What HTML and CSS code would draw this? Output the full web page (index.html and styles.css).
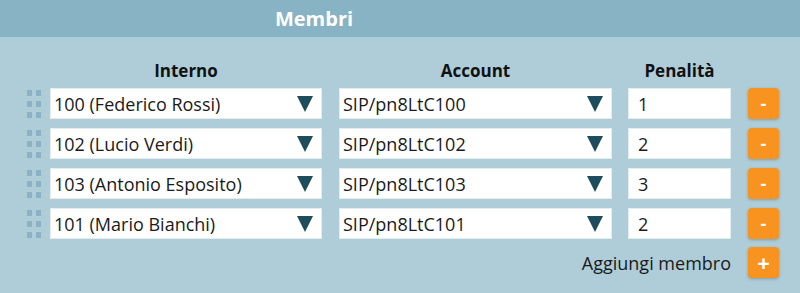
FILE: index.html
```html
<!DOCTYPE html>
<html lang="it">
<head>
<meta charset="utf-8">
<title>Membri</title>
<link rel="stylesheet" href="styles.css">
</head>
<body>
<div class="panel">
  <div class="panel-head"><h2 class="panel-title">Membri</h2></div>
  <div class="panel-body">
    <div class="grid">
      <div class="col-title col-interno">Interno</div>
      <div class="col-title col-account">Account</div>
      <div class="col-title col-pen">Penalità</div>

      <div class="handle"><i></i><i></i><i></i><i></i><i></i><i></i></div>
      <div class="select col-interno"><span>100 (Federico Rossi)</span><span class="caret"></span></div>
      <div class="select col-account"><span>SIP/pn8LtC100</span><span class="caret"></span></div>
      <div class="input">1</div>
      <button class="btn">-</button>

      <div class="handle"><i></i><i></i><i></i><i></i><i></i><i></i></div>
      <div class="select col-interno"><span>102 (Lucio Verdi)</span><span class="caret"></span></div>
      <div class="select col-account"><span>SIP/pn8LtC102</span><span class="caret"></span></div>
      <div class="input">2</div>
      <button class="btn">-</button>

      <div class="handle"><i></i><i></i><i></i><i></i><i></i><i></i></div>
      <div class="select col-interno"><span>103 (Antonio Esposito)</span><span class="caret"></span></div>
      <div class="select col-account"><span>SIP/pn8LtC103</span><span class="caret"></span></div>
      <div class="input">3</div>
      <button class="btn">-</button>

      <div class="handle"><i></i><i></i><i></i><i></i><i></i><i></i></div>
      <div class="select col-interno"><span>101 (Mario Bianchi)</span><span class="caret"></span></div>
      <div class="select col-account"><span>SIP/pn8LtC101</span><span class="caret"></span></div>
      <div class="input">2</div>
      <button class="btn">-</button>

      <div class="add-label">Aggiungi membro</div>
      <button class="btn btn-plus">+</button>
    </div>
  </div>
</div>
</body>
</html>
```

FILE: styles.css
```css
html, body {
  margin: 0;
  padding: 0;
  background: #afcdd8;
  font-family: "Open Sans", "Noto Sans", sans-serif;
  color: #222;
}

.panel {
  width: 800px;
  height: 293px;
  background: #afcdd8;
  overflow: hidden;
}

.panel-head {
  height: 37px;
  background: #87b3c4;
  display: flex;
  align-items: center;
  justify-content: center;
  padding-right: 172px;
}

.panel-title {
  margin: 0;
  font-size: 20px;
  font-weight: 700;
  color: #ffffff;
  line-height: 1;
}

.panel-body {
  padding: 23px 22px 0 26px;
}

.grid {
  display: grid;
  grid-template-columns: 17px 7px 272px 17px 273px 16px 103px 17px 31px;
  row-gap: 9px;
  align-items: center;
}

.col-interno { grid-column: 3 / 4; }
.col-account { grid-column: 5 / 6; }
.col-pen { grid-column: 7 / 8; }

.col-title {
  text-align: center;
  font-weight: 700;
  font-size: 17px;
  line-height: 22px;
  color: #111;
  margin-bottom: -3px;
}

.handle {
  grid-column: 1 / 2;
  display: grid;
  grid-template-columns: repeat(2, 5px);
  grid-auto-rows: 6px;
  column-gap: 4px;
  row-gap: 5px;
  align-self: center;
  margin-left: 1px;
  margin-top: 1px;
}
.handle i {
  display: block;
  background: #8bb2c3;
}

.select {
  height: 31px;
  box-sizing: border-box;
  background: #fff;
  border: 1px solid #e3edf1;
  display: flex;
  align-items: center;
  justify-content: space-between;
  padding: 0 8px 0 3px;
  font-size: 18px;
  color: #1a1a1a;
}

.caret {
  width: 0;
  height: 0;
  border-left: 8px solid transparent;
  border-right: 8px solid transparent;
  border-top: 16px solid #1d4c5d;
  margin-top: 1px;
}

.input {
  grid-column: 7 / 8;
  height: 31px;
  box-sizing: border-box;
  background: #fff;
  border: 1px solid #e3edf1;
  display: flex;
  align-items: center;
  padding: 0 9px;
  font-size: 18px;
  color: #1a1a1a;
}

.btn {
  grid-column: 9 / 10;
  width: 31px;
  height: 31px;
  border: 0;
  padding: 0;
  border-radius: 4px;
  background: #f7931e;
  color: #fff;
  font-family: inherit;
  font-weight: 700;
  font-size: 18px;
  line-height: 31px;
  box-shadow: 0 1px 3px rgba(40, 70, 80, 0.35);
  cursor: pointer;
}

.btn-plus {
  font-size: 22px;
  margin-top: -1px;
}

.add-label {
  grid-column: 1 / 8;
  text-align: right;
  font-size: 18px;
  color: #1a1a1a;
  margin-top: -1px;
}
```
